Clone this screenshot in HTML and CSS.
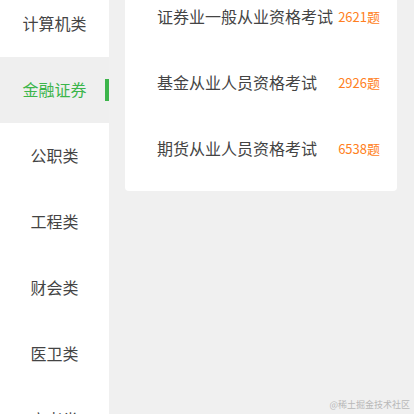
FILE: index.html
```html
<!DOCTYPE html>
<html lang="zh-CN">
<head>
<meta charset="utf-8">
<link rel="stylesheet" href="styles.css">
</head>
<body>
<div class="page">
  <nav class="sidebar">
    <div class="cat">计算机类</div>
    <div class="cat active">金融证券<span class="bar"></span></div>
    <div class="cat">公职类</div>
    <div class="cat">工程类</div>
    <div class="cat">财会类</div>
    <div class="cat">医卫类</div>
    <div class="cat">高考类</div>
  </nav>
  <main class="content">
    <div class="card">
      <div class="item"><span class="name">证券业一般从业资格考试</span><span class="count">2621题</span></div>
      <div class="item"><span class="name">基金从业人员资格考试</span><span class="count">2926题</span></div>
      <div class="item"><span class="name">期货从业人员资格考试</span><span class="count">6538题</span></div>
    </div>
  </main>
</div>
<div class="watermark">@稀土掘金技术社区</div>
</body>
</html>
```
FILE: styles.css
```css
html, body {
  margin: 0;
  padding: 0;
  height: 100%;
  overflow: hidden;
  background: #f0f0f0;
  font-family: "Noto Sans CJK SC", "Noto Sans", sans-serif;
}
.page {
  display: flex;
  align-items: flex-start;
  height: 100%;
}
.sidebar {
  width: 109px;
  flex: none;
  background: #fff;
  margin-top: -9px;
  min-height: 430px;
}
.cat {
  position: relative;
  height: 66px;
  box-sizing: border-box;
  padding-bottom: 2px;
  display: flex;
  align-items: center;
  justify-content: center;
  font-size: 16px;
  color: #444;
}
.cat.active {
  background: #efefef;
  color: #3cb54b;
}
.bar {
  position: absolute;
  right: 0;
  top: 22px;
  width: 4px;
  height: 22px;
  background: #3cb54b;
}
.content {
  margin-left: 16px;
  margin-top: -16px;
}
.card {
  width: 272px;
  background: #fff;
  border-radius: 4px;
  padding-bottom: 9px;
}
.item {
  height: 66px;
  box-sizing: border-box;
  padding: 0 17px 2px 32px;
  display: flex;
  align-items: center;
  justify-content: space-between;
}
.name {
  font-size: 16px;
  color: #444;
}
.count {
  font-size: 13px;
  color: #ff7f22;
}
.watermark {
  position: absolute;
  right: 4px;
  bottom: 3px;
  font-size: 9px;
  color: #b8b8b8;
}
```
